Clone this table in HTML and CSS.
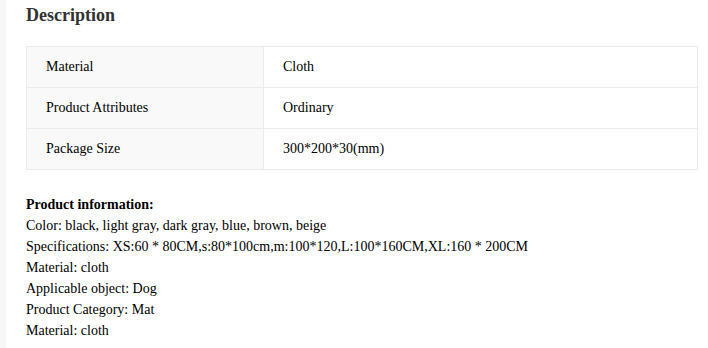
FILE: index.html
```html
<!DOCTYPE html>
<html>
<head>
<meta charset="utf-8">
<link rel="stylesheet" href="styles.css">
</head>
<body>
<div class="page">
  <div class="content">
    <h2 class="title">Description</h2>
    <table class="attrs">
      <tr><td class="key">Material</td><td class="val">Cloth</td></tr>
      <tr><td class="key">Product Attributes</td><td class="val">Ordinary</td></tr>
      <tr><td class="key">Package Size</td><td class="val">300*200*30(mm)</td></tr>
    </table>
    <div class="info">
      <p class="line"><b>Product information:</b></p>
      <p class="line">Color: black, light gray, dark gray, blue, brown, beige</p>
      <p class="line">Specifications: XS:60 * 80CM,s:80*100cm,m:100*120,L:100*160CM,XL:160 * 200CM</p>
      <p class="line">Material: cloth</p>
      <p class="line">Applicable object: Dog</p>
      <p class="line">Product Category: Mat</p>
      <p class="line">Material: cloth</p>
    </div>
  </div>
</div>
</body>
</html>
```
FILE: styles.css
```css
html, body {
  margin: 0;
  padding: 0;
  background: #f7f7f7;
}
.page {
  margin-left: 6px;
  background: #ffffff;
  min-height: 348px;
  font-family: "Liberation Serif", "Times New Roman", serif;
  color: #000;
}
.content {
  padding: 4px 10px 0 20px;
}
.title {
  margin: 0 0 19px 0;
  font-size: 18px;
  line-height: 23px;
  font-weight: bold;
  color: #333;
}
.attrs {
  width: 672px;
  border-collapse: collapse;
  font-size: 14px;
}
.attrs td {
  border: 1px solid #ebebeb;
  height: 41px;
  padding: 0 20px 0 19px;
  box-sizing: border-box;
  line-height: 20px;
}
.attrs .key {
  width: 237px;
  background: #f9f9f9;
}
.attrs .val {
  background: #fff;
}
.info {
  margin-top: 24px;
  font-size: 14px;
  line-height: 21px;
}
.line {
  margin: 0;
}
```
